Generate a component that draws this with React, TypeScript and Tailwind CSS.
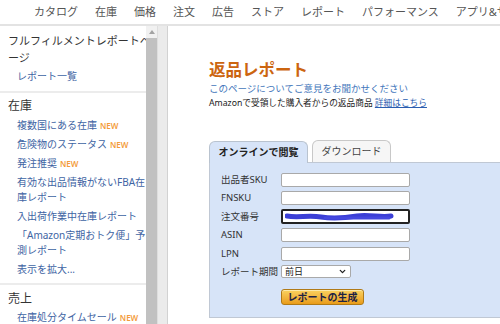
import { ChevronDown } from "lucide-react";

const navItems = ["カタログ", "在庫", "価格", "注文", "広告", "ストア", "レポート", "パフォーマンス", "アプリ&サービス"];

const inventoryLinks: { lines: string[]; isNew?: boolean }[] = [
  { lines: ["複数国にある在庫"], isNew: true },
  { lines: ["危険物のステータス"], isNew: true },
  { lines: ["発注推奨"], isNew: true },
  { lines: ["有効な出品情報がないFBA在", "庫レポート"] },
  { lines: ["入出荷作業中在庫レポート"] },
  { lines: ["「Amazon定期おトク便」予", "測レポート"] },
  { lines: ["表示を拡大..."] },
];

const font = { fontFamily: '"Noto Sans", "Noto Sans CJK JP", sans-serif' };

function NewBadge() {
  return <span className="ml-[3px] text-[8px] font-semibold text-[#f39b3a]">NEW</span>;
}

function FieldRow({ label, children }: { label: string; children: React.ReactNode }) {
  return (
    <div className="flex items-center h-[14px]">
      <span className="w-[60px] text-[9.5px] leading-[14px] text-[#333] whitespace-nowrap">{label}</span>
      {children}
    </div>
  );
}

function TextInput({ focused }: { focused?: boolean }) {
  return (
    <div
      className={
        focused
          ? "relative w-[129px] h-[15px] bg-white border-2 border-[#222] rounded-[2px]"
          : "w-[129px] h-[14px] bg-white border border-[#a9a9a9] rounded-[2px]"
      }
    >
      {focused && (
        <svg className="absolute left-[2px] top-[1px]" width="112" height="10" viewBox="0 0 112 10">
          <path
            d="M2 4 C 12 6, 24 3, 36 5 S 60 6, 72 4 S 96 6, 106 4"
            stroke="#3b3fd6"
            strokeWidth="5"
            fill="none"
            strokeLinecap="round"
          />
          <path d="M40 6 L 104 6" stroke="#4548e0" strokeWidth="3" fill="none" strokeLinecap="round" />
        </svg>
      )}
    </div>
  );
}

export default function App() {
  return (
    <div className="w-[500px] h-[324px] overflow-hidden bg-white flex flex-col" style={font}>
      {/* Top nav */}
      <div className="h-[26px] shrink-0 border-b-2 border-[#e3e3e3] flex items-center pl-[34px] gap-[17px] text-[11px] text-[#555] whitespace-nowrap">
        {navItems.map((n) => (
          <span key={n}>{n}</span>
        ))}
      </div>

      <div className="flex flex-1 min-h-0">
        {/* Sidebar */}
        <div className="w-[146px] shrink-0 overflow-hidden">
          <div className="px-[8px] pt-[6px] pb-[7px]">
            <div className="text-[11px] leading-[17px] text-[#333] whitespace-nowrap">
              フルフィルメントレポートペ
              <br />
              ージ
            </div>
            <div className="mt-[3px] pl-[9px] text-[10px] leading-[15px] text-[#3e64a3]">レポート一覧</div>
          </div>
          <div className="h-[2px] bg-[#ececec]" />
          <div className="px-[8px] pt-[5px] pb-[6px]">
            <div className="text-[12px] leading-[16px] text-[#333]">在庫</div>
            <div className="mt-[3.5px] pl-[9px] flex flex-col gap-[4px]">
              {inventoryLinks.map((l) => (
                <div key={l.lines[0]} className="text-[10px] leading-[15px] text-[#3e64a3] whitespace-nowrap">
                  {l.lines.map((t, i) => (
                    <div key={t}>
                      {t}
                      {l.isNew && i === 0 && <NewBadge />}
                    </div>
                  ))}
                </div>
              ))}
            </div>
          </div>
          <div className="h-[2px] bg-[#ececec]" />
          <div className="px-[8px] pt-[6px]">
            <div className="text-[12px] leading-[16px] text-[#333]">売上</div>
            <div className="mt-[3px] pl-[9px] text-[10px] leading-[15px] text-[#3e64a3] whitespace-nowrap">
              在庫処分タイムセール
              <NewBadge />
            </div>
          </div>
        </div>

        {/* Scrollbar */}
        <div className="w-[11px] shrink-0 bg-[#f1f1f1] flex flex-col">
          <div className="h-[12px] flex items-center justify-center">
            <svg width="6" height="4" viewBox="0 0 6 4">
              <path d="M0 4 L3 0 L6 4 Z" fill="#a3a3a3" />
            </svg>
          </div>
          <div className="flex-1 bg-[#c1c1c1]" />
        </div>
        <div className="w-[11px] shrink-0 bg-[#ebebeb] border-l border-[#dedede] border-r border-r-[#d2d2d2]" />

        {/* Main */}
        <div className="flex-1 min-w-0 pl-[41px] pt-[33px]">
          <div className="text-[16.5px] leading-[22px] font-bold text-[#cc6510] whitespace-nowrap">返品レポート</div>
          <div className="mt-[1px] text-[9.5px] leading-[14px] text-[#4477bb] whitespace-nowrap">
            このページについてご意見をお聞かせください
          </div>
          <div className="text-[8.7px] leading-[14px] text-[#222] whitespace-nowrap">
            Amazonで受領した購入者からの返品商品{" "}
            <span className="text-[#2a5db0] underline">詳細はこちら</span>
          </div>

          {/* Tabs */}
          <div className="mt-[30px] flex items-end gap-[4px] h-[22px]">
            <div className="w-[99px] h-[22px] bg-[#d7e4f8] border border-b-0 border-[#b9c3cf] rounded-t-[6px] flex items-center justify-center text-[10px] font-bold text-[#222] relative z-10 -mb-px">
              オンラインで閲覧
            </div>
            <div className="w-[79px] h-[22px] bg-[#f6f6f6] border border-b-0 border-[#c8c8c8] rounded-t-[6px] flex items-center justify-center text-[10px] text-[#444]">
              ダウンロード
            </div>
          </div>

          {/* Panel */}
          <div className="w-[320px] border border-r-0 border-[#c0c8d4] bg-[#d7e4f8] pl-[11px] pt-[10px] pb-[10px] flex flex-col gap-[4.4px]">
            <FieldRow label="出品者SKU">
              <TextInput />
            </FieldRow>
            <FieldRow label="FNSKU">
              <TextInput />
            </FieldRow>
            <FieldRow label="注文番号">
              <TextInput focused />
            </FieldRow>
            <FieldRow label="ASIN">
              <TextInput />
            </FieldRow>
            <FieldRow label="LPN">
              <TextInput />
            </FieldRow>
            <FieldRow label="レポート期間">
              <div className="w-[70px] h-[13px] bg-white border border-[#a9a9a9] rounded-[2px] flex items-center justify-between px-[3px]">
                <span className="text-[9px] leading-[11px] text-[#222]">前日</span>
                <ChevronDown size={9} strokeWidth={3.5} className="text-[#222]" />
              </div>
            </FieldRow>
            <div className="pl-[60px]">
              <button className="w-[83px] h-[16px] rounded-[3px] border border-[#b07a18] bg-gradient-to-b from-[#fad25e] to-[#e99c16] text-[10px] leading-[14px] font-bold text-[#1e2244] shadow-[inset_0_1px_0_#fde9a8]">
                レポートの生成
              </button>
            </div>
          </div>
        </div>
      </div>
    </div>
  );
}
